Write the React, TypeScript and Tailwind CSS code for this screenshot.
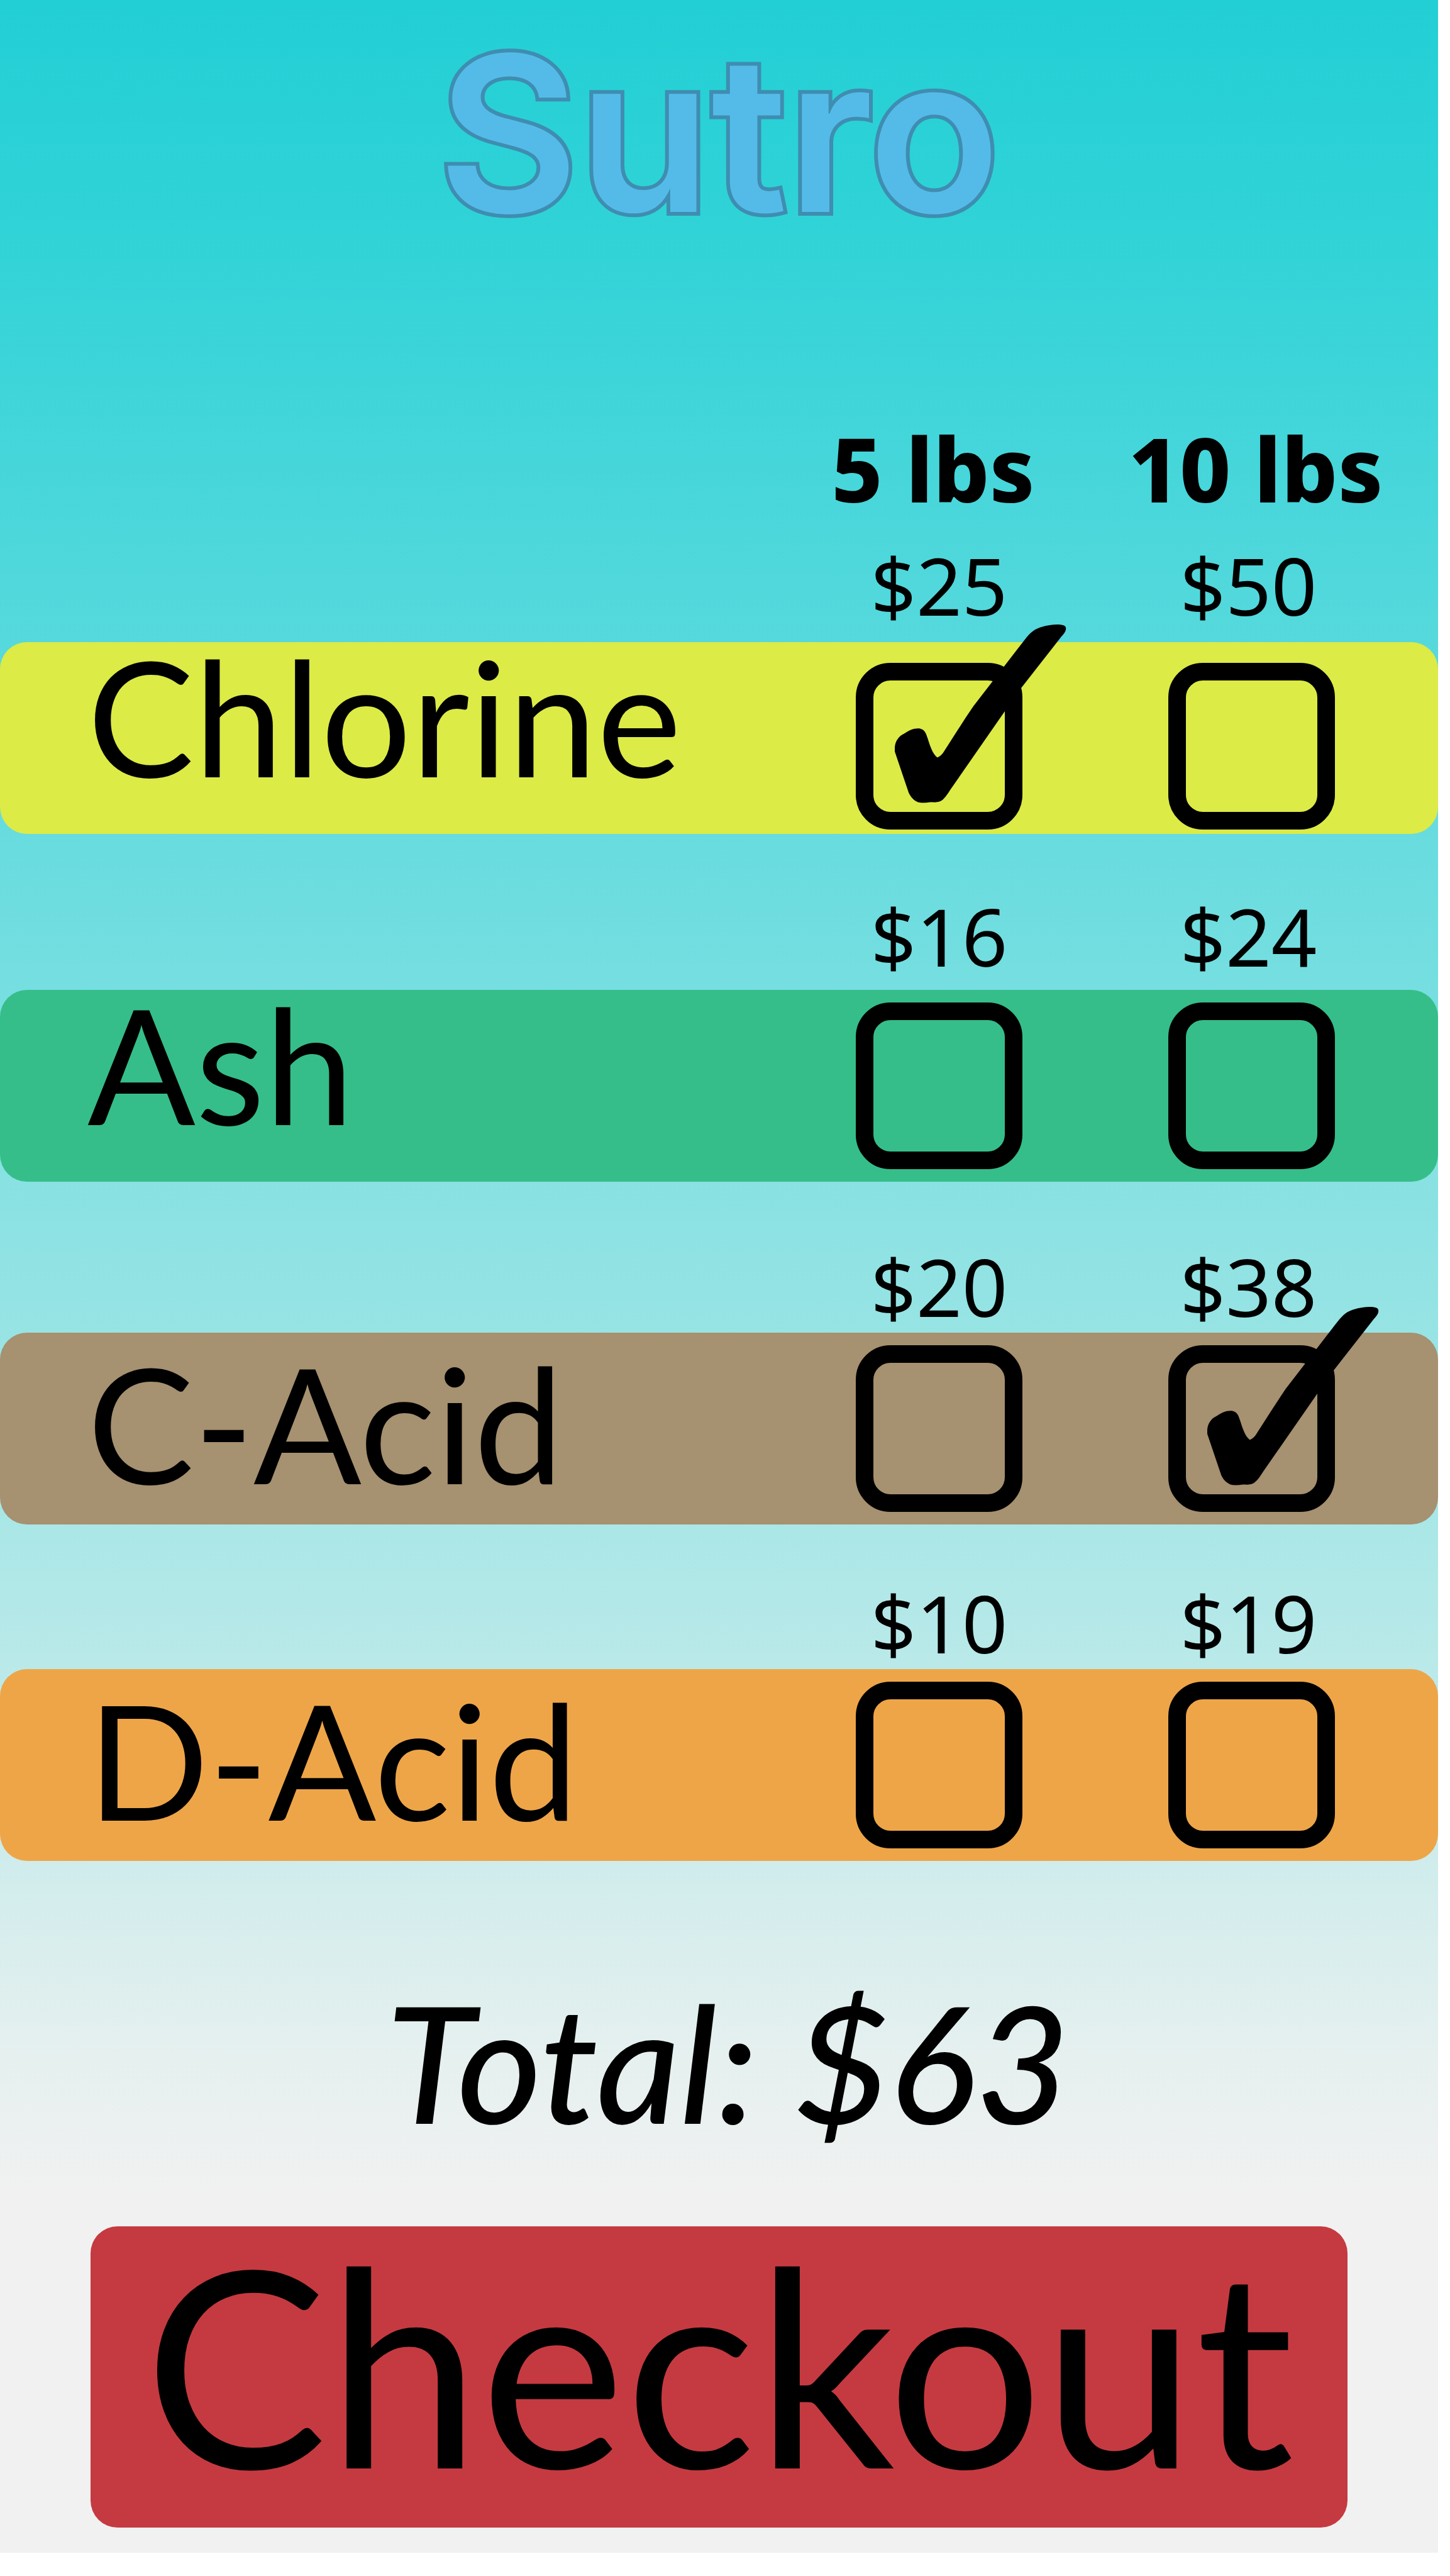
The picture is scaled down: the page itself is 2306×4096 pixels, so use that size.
import { useId, useState } from "react";

type Size = "small" | "large";

type Product = {
  name: string;
  prices: Record<Size, number>;
  bar: string;
  lead: string;
  priceGap: string;
  namePad: string;
  boxPad: string;
};

const products: Product[] = [
  {
    name: "Chlorine",
    prices: { small: 25, large: 50 },
    bar: "bg-[#dceb46]",
    lead: "mt-[51px]",
    priceGap: "pb-[27px]",
    namePad: "pt-[7px]",
    boxPad: "pt-[33px]",
  },
  {
    name: "Ash",
    prices: { small: 16, large: 24 },
    bar: "bg-[#35be8a]",
    lead: "mt-[98px]",
    priceGap: "pb-[22px]",
    namePad: "pt-[7px]",
    boxPad: "pt-5",
  },
  {
    name: "C-Acid",
    prices: { small: 20, large: 38 },
    bar: "bg-[#a69170]",
    lead: "mt-[102px]",
    priceGap: "pb-[10px]",
    namePad: "pt-[33px]",
    boxPad: "pt-5",
  },
  {
    name: "D-Acid",
    prices: { small: 10, large: 19 },
    bar: "bg-[#eea548]",
    lead: "mt-[92px]",
    priceGap: "pb-[10px]",
    namePad: "pt-[33px]",
    boxPad: "pt-5",
  },
];

const sizes: { key: Size; label: string }[] = [
  { key: "small", label: "5 lbs" },
  { key: "large", label: "10 lbs" },
];

function CheckBox({
  id,
  checked,
  onChange,
}: {
  id: string;
  checked: boolean;
  onChange: () => void;
}) {
  return (
    <span className="relative block size-[265px]">
      <input
        id={id}
        type="checkbox"
        checked={checked}
        onChange={onChange}
        className="block size-full cursor-pointer appearance-none rounded-[55px] border-[28px] border-black"
      />
      {checked && (
        <svg
          viewBox="0 0 319 332"
          className="pointer-events-none absolute -top-[61px] left-[62px] w-[273px]"
          aria-hidden="true"
        >
          <path d="M0 228C1 216 8 207 17 203C26 197 34 193 43 193C50 193 55 196 58 203C62 213 64 222 68 231C71 238 74 243 79 247C84 245 88 241 90 238C110 207 127 180 146 152L233 39C242 28 250 16 260 10C273 3 286 1 301 0C312 0 319 2 318 8C318 13 314 18 310 22L231 123L104 306C98 315 92 326 83 329C77 331 72 330 66 330C58 331 50 332 43 330C34 326 30 321 26 313L0 236Z" />
        </svg>
      )}
    </span>
  );
}

export default function App() {
  const baseId = useId();
  const [selected, setSelected] = useState<Record<string, boolean>>({
    "Chlorine-small": true,
    "C-Acid-large": true,
  });

  const toggle = (key: string) =>
    setSelected((current) => ({ ...current, [key]: !current[key] }));

  const total = products.reduce(
    (sum, product) =>
      sum +
      sizes.reduce(
        (rowSum, size) =>
          rowSum +
          (selected[`${product.name}-${size.key}`] ? product.prices[size.key] : 0),
        0,
      ),
    0,
  );

  return (
    <div className="flex min-h-screen flex-col bg-white pr-[19px] pb-[37px] font-['Lato',sans-serif] text-black">
      <main className="flex flex-1 flex-col bg-[linear-gradient(180deg,#22cfd5_0%,#30d3d7_9%,#45d6da_18%,#68dcdf_33%,#88e1e2_46%,#abe7e7_60%,#d0ecec_73%,#e4f0ef_80%,#f1f1f1_86%,#f1f1f1_100%)]">
        <h1 className="pt-[40px] text-center font-['Inter',sans-serif] text-[344px] leading-[344px] font-semibold text-[#54bbe9] [-webkit-text-stroke:12px_#3f8db0] [paint-order:stroke_fill]">
          Sutro
        </h1>

        <div className="mt-[290px] grid grid-cols-[1fr_526px_500px] pr-10 font-['Noto_Sans',sans-serif]">
          {sizes.map((size, index) => (
            <h2
              key={size.key}
              className={`${index === 0 ? "col-start-2" : ""} text-center text-[141px] leading-[141px] font-extrabold`}
            >
              {size.label}
            </h2>
          ))}
        </div>

        {products.map((product) => (
          <section key={product.name} className={product.lead}>
            <div
              className={`grid grid-cols-[1fr_487px_497px] pr-[53px] ${product.priceGap} font-['Noto_Sans',sans-serif]`}
            >
              {sizes.map((size, index) => (
                <label
                  key={size.key}
                  htmlFor={`${baseId}-${product.name}-${size.key}`}
                  className={`${index === 0 ? "col-start-2" : ""} text-center text-[127px] leading-[128px]`}
                >
                  ${product.prices[size.key]}
                </label>
              ))}
            </div>
            <div
              className={`grid h-[305px] grid-cols-[1fr_497px_497px] rounded-[43px] pr-12 ${product.bar}`}
            >
              <h3 className={`${product.namePad} pl-[139px] text-[254px] leading-[220px]`}>
                {product.name}
              </h3>
              {sizes.map((size) => {
                const key = `${product.name}-${size.key}`;
                return (
                  <div key={key} className={`flex justify-center ${product.boxPad}`}>
                    <CheckBox
                      id={`${baseId}-${key}`}
                      checked={Boolean(selected[key])}
                      onChange={() => toggle(key)}
                    />
                  </div>
                );
              })}
            </div>
          </section>
        ))}

        <p className="mt-[194px] pl-7 text-center text-[258px] leading-[248px] font-medium italic">
          Total: ${total}
        </p>

        <button
          type="button"
          className="mx-[144px] mt-[139px] mb-[39px] h-[479px] cursor-pointer rounded-[43px] bg-[#c53a40] pb-[46px] text-[436px] leading-[433px]"
        >
          Checkout
        </button>
      </main>
    </div>
  );
}
